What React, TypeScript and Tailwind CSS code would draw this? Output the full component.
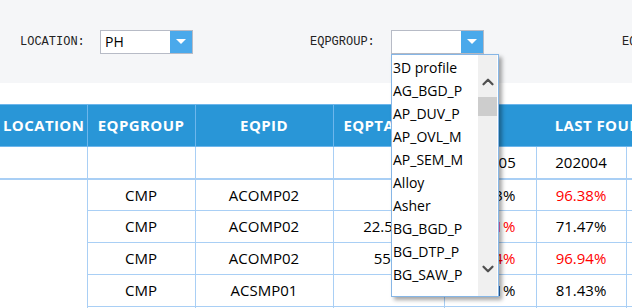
import { ChevronDown, ChevronUp } from "lucide-react";

type Cell = { v: string; red?: boolean };

interface RowProps {
  grp: string;
  id: string;
  ta: string;
  w1: Cell;
  w2: Cell;
}

const rows: RowProps[] = [
  { grp: "CMP", id: "ACOMP02", ta: "", w1: { v: "97.83%" }, w2: { v: "96.38%", red: true } },
  { grp: "CMP", id: "ACOMP02", ta: "22.58%", w1: { v: "94.21%", red: true }, w2: { v: "71.47%" } },
  { grp: "CMP", id: "ACOMP02", ta: "55%", w1: { v: "95.14%", red: true }, w2: { v: "96.94%", red: true } },
  { grp: "CMP", id: "ACSMP01", ta: "", w1: { v: "83.21%" }, w2: { v: "81.43%" } },
  { grp: "CMP", id: "ACSMP01", ta: "", w1: { v: "90.02%" }, w2: { v: "88.70%" } },
];

const groups = [
  "3D profile",
  "AG_BGD_P",
  "AP_DUV_P",
  "AP_OVL_M",
  "AP_SEM_M",
  "Alloy",
  "Asher",
  "BG_BGD_P",
  "BG_DTP_P",
  "BG_SAW_P",
];

const Select = ({ value, open }: { value: string; open?: boolean }) => (
  <div className="relative shrink-0">
    <div className="flex w-[93px] h-[24px] border border-[#b7bbc6] bg-white">
      <span className="flex-1 pl-[4px] text-[14px] leading-[22px] text-black font-['Open_Sans',sans-serif]">
        {value}
      </span>
      <span className="w-[22px] h-full bg-[#4aa9eb] flex items-center justify-center">
        <span className="w-0 h-0 border-l-[5px] border-r-[5px] border-t-[5px] border-l-transparent border-r-transparent border-t-white" />
      </span>
    </div>
    {open && (
      <div className="absolute left-0 top-full z-10 w-[108px] h-[243px] flex bg-white border border-[#86b6e6] shadow-[3px_3px_4px_rgba(0,0,0,0.35)] overflow-hidden">
        <ul className="flex-1 pt-[1px] font-['Open_Sans',sans-serif] text-[14px] leading-[23px] text-black">
          {groups.map((g) => (
            <li key={g} className="pl-[1px] whitespace-nowrap">
              {g}
            </li>
          ))}
        </ul>
        <div className="w-[19px] mr-[1px] shrink-0 bg-[#f0f0f0] flex flex-col items-center">
          <ChevronUp className="w-[18px] h-[18px] mt-[18px] text-[#505050]" strokeWidth={3} />
          <div className="w-full h-[19px] mt-[6px] bg-[#cdcdcd]" />
          <ChevronDown className="w-[18px] h-[18px] mt-auto mb-[18px] text-[#505050]" strokeWidth={3} />
        </div>
      </div>
    )}
  </div>
);

const td = "border border-[#a9cff5] text-center";

export default function App() {
  return (
    <div className="w-[632px] h-[308px] overflow-hidden bg-white relative">
      <div className="h-[83px] bg-[#f5f6f8] flex items-center pl-[20px] font-['Liberation_Mono',monospace] text-[12px] text-[#222]">
        <span className="w-[80px] shrink-0">LOCATION:</span>
        <Select value="PH" />
        <span className="w-[81px] shrink-0 ml-[117px]">EQPGROUP:</span>
        <Select value="" open />
        <span className="ml-[138px] shrink-0 whitespace-nowrap">EQPID:</span>
      </div>

      <table className="mt-[21px] w-[806px] table-fixed border-collapse font-['Open_Sans',sans-serif] text-[15px]">
        <colgroup>
          <col className="w-[87px]" />
          <col className="w-[108px]" />
          <col className="w-[138px]" />
          <col className="w-[111px]" />
          <col className="w-[92px]" />
          <col className="w-[90px]" />
          <col className="w-[90px]" />
          <col className="w-[90px]" />
        </colgroup>
        <thead>
          <tr className="h-[42px] bg-[#2996d7] text-white font-bold tracking-[0.4px]">
            <th className="border border-[#6db6ec] border-l-0 text-left pl-[3px]">LOCATION</th>
            <th className="border border-[#6db6ec]">EQPGROUP</th>
            <th className="border border-[#6db6ec]">EQPID</th>
            <th className="border border-[#6db6ec]">EQPTARGET</th>
            <th colSpan={4} className="border border-[#6db6ec]">
              LAST FOUR WEEKS
            </th>
          </tr>
        </thead>
        <tbody className="text-black">
          <tr className="h-[32px]">
            <td className={`${td} border-l-0 border-b-2`} />
            <td className={`${td} border-b-2`} />
            <td className={`${td} border-b-2`} />
            <td className={`${td} border-b-2`} />
            <td className={`${td} border-b-2`}>202005</td>
            <td className={`${td} border-b-2`}>202004</td>
            <td className={`${td} border-b-2`}>202003</td>
            <td className={`${td} border-b-2`}>202002</td>
          </tr>
          {rows.map((r, i) => (
            <tr key={i} className="h-[32px]">
              {i === 0 && (
                <td rowSpan={rows.length} className="border-r border-[#a9cff5]" />
              )}
              <td className={td}>{r.grp}</td>
              <td className={td}>{r.id}</td>
              <td className={td}>{r.ta}</td>
              <td className={`${td} ${r.w1.red ? "text-[#ff0000]" : ""}`}>{r.w1.v}</td>
              <td className={`${td} ${r.w2.red ? "text-[#ff0000]" : ""}`}>{r.w2.v}</td>
              <td className={td}>92.10%</td>
              <td className={td}>90.55%</td>
            </tr>
          ))}
        </tbody>
      </table>
    </div>
  );
}
